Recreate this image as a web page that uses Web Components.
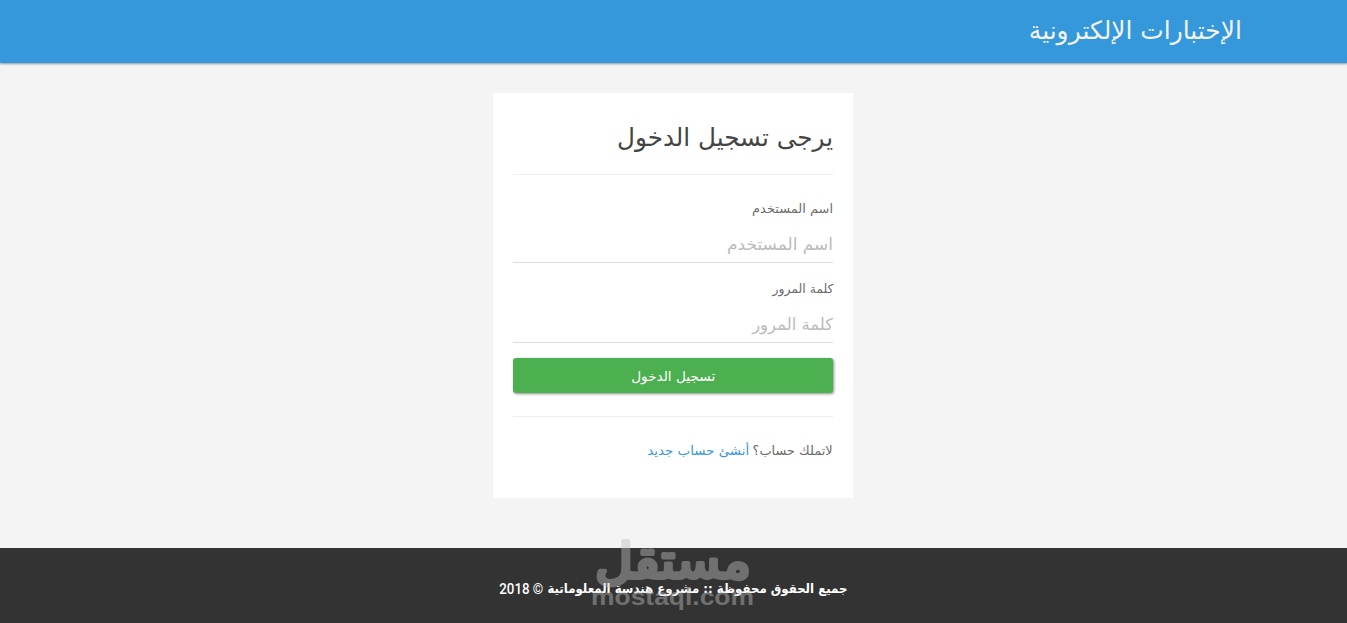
<!DOCTYPE html>
<html lang="ar" dir="rtl">
<head>
<meta charset="utf-8">
<title>الإختبارات الإلكترونية</title>
<style>
  body {
    margin: 0;
    background: #f4f4f4;
    font-family: "DejaVu Sans", sans-serif;
    overflow: hidden;
  }
</style>
</head>
<body>
<login-page></login-page>

<script>
// One line of text, scaled horizontally to a given width
class FitText extends HTMLElement {
  constructor() {
    super();
    this.attachShadow({mode: 'open'});
  }

  connectedCallback() {
    const width = Number(this.getAttribute('width'));
    this.shadowRoot.innerHTML = `
      <style>
        :host {
          display: inline-block;
          width: ${width}px;
          white-space: nowrap;
          text-align: start;
        }
        span {
          display: inline-block;
          transform-origin: right center;
        }
      </style>
      <span><slot></slot></span>
    `;
    const span = this.shadowRoot.querySelector('span');
    span.style.transform = `scaleX(${width / span.getBoundingClientRect().width})`;
  }
}
customElements.define('fit-text', FitText);

class SiteHeader extends HTMLElement {
  constructor() {
    super();
    this.attachShadow({mode: 'open'});
    this.shadowRoot.innerHTML = `
      <style>
        :host {
          display: block;
          box-sizing: border-box;
          height: 63px;
          padding: 0 105px;
          background: #3498db;
          box-shadow: 0 1px 2px rgba(0, 0, 0, 0.4);
          color: #f3f3f3;
          font-size: 25px;
          line-height: 61px;
        }
      </style>
      <slot></slot>
    `;
  }
}
customElements.define('site-header', SiteHeader);

class FormField extends HTMLElement {
  constructor() {
    super();
    this.attachShadow({mode: 'open'});
  }

  connectedCallback() {
    const label = this.getAttribute('label');
    this.shadowRoot.innerHTML = `
      <style>
        :host {
          display: block;
          height: 80px;
        }
        label {
          display: block;
          height: 29px;
          color: #6b6b6b;
          font-size: 12.5px;
          line-height: 21px;
        }
        .control {
          display: grid;
          box-sizing: border-box;
          height: 36px;
          border-bottom: 1px solid #ddd;
          color: #bbb;
          font-size: 16.5px;
          line-height: 35px;
        }
        .control > * {
          grid-area: 1 / 1;
        }
        input {
          width: 100%;
          box-sizing: border-box;
          border: 0;
          padding: 0;
          outline: 0;
          background: transparent;
        }
      </style>
      <label><fit-text width="${this.getAttribute('label-width')}">${label}</fit-text></label>
      <div class="control">
        <fit-text width="${this.getAttribute('hint-width')}">${label}</fit-text>
        <input type="${this.getAttribute('type')}" aria-label="${label}">
      </div>
    `;
    const input = this.shadowRoot.querySelector('input');
    const hint = this.shadowRoot.querySelector('.control fit-text');
    input.addEventListener('input', () => {
      hint.style.visibility = input.value ? 'hidden' : 'visible';
    });
  }
}
customElements.define('form-field', FormField);

class SubmitButton extends HTMLElement {
  constructor() {
    super();
    this.attachShadow({mode: 'open'});
    this.shadowRoot.innerHTML = `
      <style>
        :host {
          display: block;
        }
        button {
          display: block;
          width: 100%;
          height: 35px;
          padding: 0;
          border: 0;
          border-radius: 3px;
          background: #4caf50;
          box-shadow: 1px 1px 3px rgba(0, 0, 0, 0.45);
          color: #fff;
          font: 13.5px/34px "DejaVu Sans", sans-serif;
          cursor: pointer;
        }
      </style>
      <button type="submit"><slot></slot></button>
    `;
  }
}
customElements.define('submit-button', SubmitButton);

class LoginCard extends HTMLElement {
  constructor() {
    super();
    this.attachShadow({mode: 'open'});
    this.shadowRoot.innerHTML = `
      <style>
        :host {
          display: block;
          box-sizing: border-box;
          width: 360px;
          height: 405px;
          padding: 0 20px;
          background: #fff;
        }
        h1 {
          box-sizing: border-box;
          height: 82px;
          margin: 0 0 23px;
          padding-top: 23px;
          border-bottom: 1px solid #eee;
          color: #444;
          font-size: 25px;
          font-weight: normal;
          line-height: 43px;
        }
        .fields {
          height: 160px;
        }
        p {
          margin: 23px 0 0;
          padding-top: 23px;
          border-top: 1px solid #eee;
          color: #6b6b6b;
          font-size: 12.5px;
          line-height: 22px;
        }
        .row {
          display: flex;
          gap: 4px;
        }
        a {
          color: #3498db;
          text-decoration: none;
        }
      </style>
      <h1><fit-text width="216">يرجى تسجيل الدخول</fit-text></h1>
      <div class="fields">
        <form-field label="اسم المستخدم" label-width="81" hint-width="106" type="text"></form-field>
        <form-field label="كلمة المرور" label-width="61" hint-width="81" type="password"></form-field>
      </div>
      <submit-button><fit-text width="84">تسجيل الدخول</fit-text></submit-button>
      <p class="row">
        <fit-text width="80">لاتملك حساب؟</fit-text>
        <a href="#"><fit-text width="102">أنشئ حساب جديد</fit-text></a>
      </p>
    `;
  }
}
customElements.define('login-card', LoginCard);

class SiteFooter extends HTMLElement {
  constructor() {
    super();
    this.attachShadow({mode: 'open'});
    this.shadowRoot.innerHTML = `
      <style>
        :host {
          display: flex;
          justify-content: center;
          gap: 4px;
          box-sizing: border-box;
          height: 75px;
          padding: 29px 1px 0 0;
          background: #333;
          color: #fff;
          font: bold 13px/24px "DejaVu Sans", sans-serif;
        }
        .year {
          font: 500 14px/25px Roboto, sans-serif;
        }
      </style>
      <fit-text width="300">جميع الحقوق محفوظة :: مشروع هندسة المعلوماتية</fit-text>
      <fit-text class="year" width="44">© 2018</fit-text>
    `;
  }
}
customElements.define('site-footer', SiteFooter);

// Translucent wordmark lying over the bottom of the page
class WaterMark extends HTMLElement {
  constructor() {
    super();
    this.attachShadow({mode: 'open'});
    this.shadowRoot.innerHTML = `
      <style>
        :host {
          position: absolute;
          left: 588px;
          top: 530px;
          opacity: 0.44;
          pointer-events: none;
        }
        svg {
          display: block;
        }
      </style>
      <svg width="170" height="86" viewBox="0 0 170 86" direction="ltr" fill="#bfbfbf">
        <text x="7" y="48" font-family="DejaVu Sans" font-size="49"
          textLength="156" lengthAdjust="spacingAndGlyphs" stroke="#bfbfbf" stroke-width="4" stroke-linejoin="round">مستقل</text>
        <text x="3" y="75" font-family="Liberation Sans" font-size="24" font-weight="bold"
          textLength="163" lengthAdjust="spacingAndGlyphs">mostaql.com</text>
      </svg>
    `;
  }
}
customElements.define('water-mark', WaterMark);

class LoginPage extends HTMLElement {
  constructor() {
    super();
    this.attachShadow({mode: 'open'});
    this.shadowRoot.innerHTML = `
      <style>
        :host {
          display: flex;
          flex-direction: column;
          height: 623px;
        }
        main {
          flex: 1;
          display: flex;
          justify-content: center;
          align-items: flex-start;
          padding: 30px 1px 0 0;
        }
      </style>
      <site-header><fit-text width="213">الإختبارات الإلكترونية</fit-text></site-header>
      <main><login-card></login-card></main>
      <site-footer></site-footer>
      <water-mark></water-mark>
    `;
  }
}
customElements.define('login-page', LoginPage);
</script>
</body>
</html>
